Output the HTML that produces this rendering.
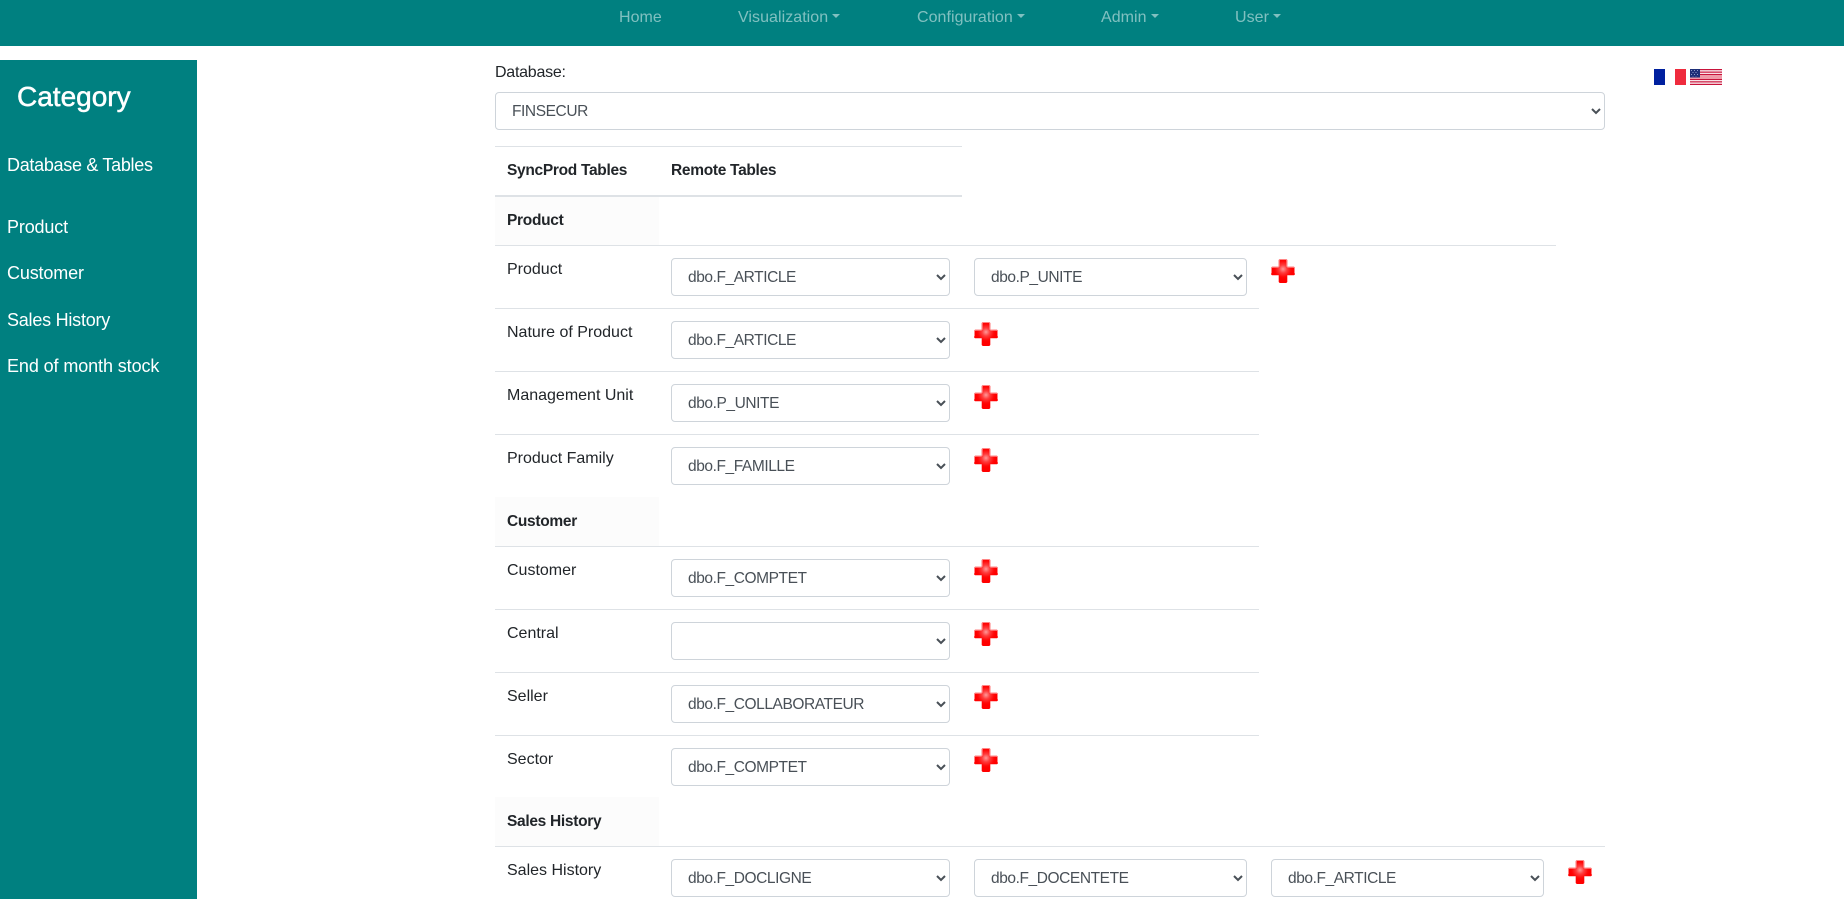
<!DOCTYPE html>
<html lang="en">
<head>
<meta charset="utf-8">
<title>Database &amp; Tables</title>
<style>
html,body{margin:0;padding:0;width:1844px;height:899px;overflow:hidden;background:#fff}
body{position:relative;font-family:"Liberation Sans",Arial,sans-serif;font-size:16px;color:#212529}
.a{position:absolute;white-space:nowrap;line-height:24px}
.nav{position:absolute;left:0;top:0;width:1844px;height:46px;background:#008080}
.n{position:absolute;top:6px;line-height:24px;color:rgba(255,255,255,.5);white-space:nowrap;letter-spacing:.05px}
.n.c::after{content:"";display:inline-block;margin-left:4px;vertical-align:4px;border-top:4.8px solid;border-left:4.8px solid transparent;border-right:4.8px solid transparent}
.side{position:absolute;left:0;top:60px;width:197px;height:839px;background:#008080}
.s{position:absolute;left:7px;color:#fff;font-size:18px;line-height:24px;white-space:nowrap}
.cat{position:absolute;left:17px;top:20px;font-size:28px;line-height:34px;color:#fff;-webkit-text-stroke:.5px #fff}
.l{position:absolute;height:1px;background:#dee2e6}
.sec{position:absolute;left:495px;width:164px;background:#fcfcfc}
b{font-weight:700;position:absolute;white-space:nowrap;line-height:24px;font-size:15.5px;letter-spacing:-.3px}
.t{position:absolute;left:507px;line-height:24px;white-space:nowrap}
select{position:absolute;box-sizing:border-box;height:38px;padding:6px 12px;margin:0;font:15.5px/24px "Liberation Sans",Arial,sans-serif;color:#495057;background:#fff;border:1px solid #ced4da;border-radius:4px;letter-spacing:-.42px}
.w1{left:671px;width:279px}.w2{left:974px;width:273px}.w3{left:1271px;width:273px}
.p{position:absolute;width:24px;height:24px}
</style>
</head>
<body>
<svg width="0" height="0" style="position:absolute">
<defs>
<radialGradient id="g" gradientUnits="userSpaceOnUse" cx="12" cy="10" r="10">
<stop offset="0" stop-color="#ff9a9a"/><stop offset=".4" stop-color="#ff3c3c"/><stop offset=".8" stop-color="#ff0808"/><stop offset="1" stop-color="#ff0000"/>
</radialGradient>
<g id="plus">
<path d="M8.700 0h6.600l1 1v6.700H23l1 1v6.600l-1 1h-6.700V23l-1 1H8.700l-1-1v-6.700H1l-1-1V8.700l1-1h6.700V1z" fill="url(#g)"/>
<path d="M8.200 7.700V1.300l.7-.8h6.200l.7.8v6.400M7.700 8.200H1.300l-.8.7v5.600M16.300 8.200h6.400l.8.7v5.600" fill="none" stroke="#ff8585" stroke-width="1"/>
</g>
</defs>
</svg>

<div class="nav">
<span class="n" style="left:619px">Home</span>
<span class="n c" style="left:738px">Visualization</span>
<span class="n c" style="left:917px">Configuration</span>
<span class="n c" style="left:1101px">Admin</span>
<span class="n c" style="left:1235px">User</span>
</div>

<div class="side">
<div class="cat">Category</div>
<div class="s" style="top:93px;letter-spacing:-.3px">Database &amp; Tables</div>
<div class="s" style="top:155px;letter-spacing:-.15px">Product</div>
<div class="s" style="top:201px;letter-spacing:-.15px">Customer</div>
<div class="s" style="top:248px;letter-spacing:-.23px">Sales History</div>
<div class="s" style="top:294px;letter-spacing:-.1px">End of month stock</div>
</div>

<div class="a" style="left:495px;top:61px;letter-spacing:-.25px">Database:</div>
<select style="left:495px;top:92px;width:1110px"><option>FINSECUR</option></select>

<svg style="position:absolute;left:1654px;top:69px" width="32" height="16" viewBox="0 0 32 16"><rect width="11" height="16" fill="#00209f"/><rect x="11" width="10" height="16" fill="#fff"/><rect x="21" width="11" height="16" fill="#ef2b3d"/></svg>
<svg style="position:absolute;left:1690px;top:69px" width="32" height="16" viewBox="0 0 32 16">
<rect width="32" height="16" fill="#fff"/>
<path d="M0 0h32v1.230H0zM0 2.460h32v1.230H0zM0 4.920h32v1.230H0zM0 7.380h32v1.230H0zM0 9.850h32v1.230H0zM0 12.310h32v1.230H0zM0 14.770h32V16H0z" fill="#c8143c"/>
<rect y="6" width="32" height="4" fill="#ee9aa8"/>
<rect width="10" height="8.500" fill="#1f2f78"/>
<path d="M1 1h1v1H1zM4 1h1v1H4zM7 1h1v1H7zM2.500 3h1v1h-1zM5.500 3h1v1h-1zM1 5h1v1H1zM4 5h1v1H4zM7 5h1v1H7zM2.500 7h1v.5h-1zM5.500 7h1v.5h-1z" fill="#8f9ccb"/>
</svg>

<div class="l" style="left:495px;top:146px;width:467px"></div>
<b style="left:507px;top:159px">SyncProd Tables</b>
<b style="left:671px;top:159px">Remote Tables</b>
<div class="l" style="left:495px;top:195px;width:467px;height:2px"></div>

<div class="sec" style="top:197px;height:48px"></div>
<b style="left:507px;top:209px">Product</b>
<div class="l" style="left:495px;top:245px;width:1061px"></div>
<div class="t" style="top:258px">Product</div>
<select class="w1" style="top:258px"><option>dbo.F_ARTICLE</option></select>
<select class="w2" style="top:258px"><option>dbo.P_UNITE</option></select>
<svg class="p" style="left:1271px;top:259px" viewBox="0 0 24 24"><use href="#plus"/></svg>

<div class="l" style="left:495px;top:308px;width:764px"></div>
<div class="t" style="top:321px">Nature of Product</div>
<select class="w1" style="top:321px"><option>dbo.F_ARTICLE</option></select>
<svg class="p" style="left:974px;top:322px" viewBox="0 0 24 24"><use href="#plus"/></svg>

<div class="l" style="left:495px;top:371px;width:764px"></div>
<div class="t" style="top:384px">Management Unit</div>
<select class="w1" style="top:384px"><option>dbo.P_UNITE</option></select>
<svg class="p" style="left:974px;top:385px" viewBox="0 0 24 24"><use href="#plus"/></svg>

<div class="l" style="left:495px;top:434px;width:764px"></div>
<div class="t" style="top:447px">Product Family</div>
<select class="w1" style="top:447px"><option>dbo.F_FAMILLE</option></select>
<svg class="p" style="left:974px;top:448px" viewBox="0 0 24 24"><use href="#plus"/></svg>

<div class="sec" style="top:497px;height:49px"></div>
<b style="left:507px;top:510px">Customer</b>
<div class="l" style="left:495px;top:546px;width:764px"></div>
<div class="t" style="top:559px">Customer</div>
<select class="w1" style="top:559px"><option>dbo.F_COMPTET</option></select>
<svg class="p" style="left:974px;top:559px" viewBox="0 0 24 24"><use href="#plus"/></svg>

<div class="l" style="left:495px;top:609px;width:764px"></div>
<div class="t" style="top:622px">Central</div>
<select class="w1" style="top:622px"><option></option></select>
<svg class="p" style="left:974px;top:622px" viewBox="0 0 24 24"><use href="#plus"/></svg>

<div class="l" style="left:495px;top:672px;width:764px"></div>
<div class="t" style="top:685px">Seller</div>
<select class="w1" style="top:685px"><option>dbo.F_COLLABORATEUR</option></select>
<svg class="p" style="left:974px;top:685px" viewBox="0 0 24 24"><use href="#plus"/></svg>

<div class="l" style="left:495px;top:735px;width:764px"></div>
<div class="t" style="top:748px">Sector</div>
<select class="w1" style="top:748px"><option>dbo.F_COMPTET</option></select>
<svg class="p" style="left:974px;top:748px" viewBox="0 0 24 24"><use href="#plus"/></svg>

<div class="sec" style="top:797px;height:49px"></div>
<b style="left:507px;top:810px">Sales History</b>
<div class="l" style="left:495px;top:846px;width:1110px"></div>
<div class="t" style="top:859px">Sales History</div>
<select class="w1" style="top:859px"><option>dbo.F_DOCLIGNE</option></select>
<select class="w2" style="top:859px"><option>dbo.F_DOCENTETE</option></select>
<select class="w3" style="top:859px"><option>dbo.F_ARTICLE</option></select>
<svg class="p" style="left:1568px;top:860px" viewBox="0 0 24 24"><use href="#plus"/></svg>
</body>
</html>
